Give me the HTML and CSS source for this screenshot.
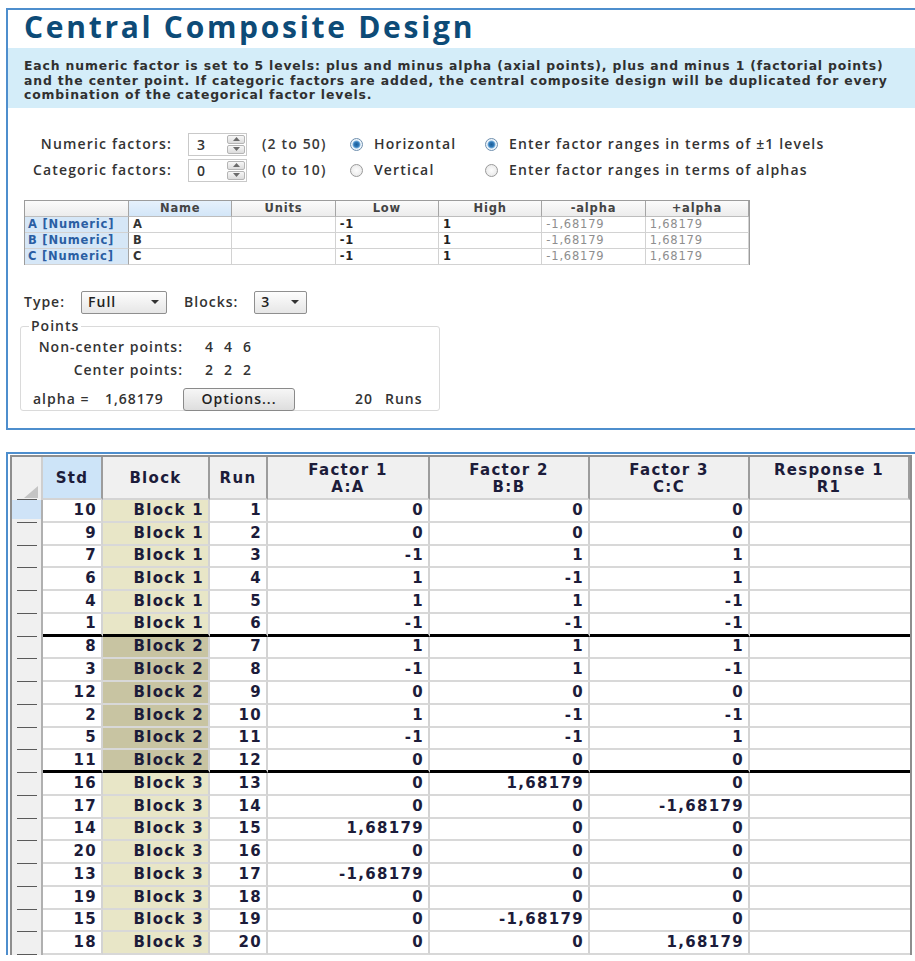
FILE: index.html
```html
<!DOCTYPE html>
<html lang="en">
<head>
<meta charset="utf-8">
<title>Central Composite Design</title>
<link rel="stylesheet" href="styles.css">
</head>
<body>
<main class="page">
  <section class="wizard">
    <h1 class="wizard-title">Central Composite Design</h1>
    <p class="wizard-intro"><span class="intro-line">Each numeric factor is set to 5 levels: plus and minus alpha (axial points), plus and minus 1 (factorial points)</span><span class="intro-line">and the center point. If categoric factors are added, the central composite design will be duplicated for every</span><span class="intro-line">combination of the categorical factor levels.</span></p>

    <div class="factor-grid">
      <span class="factor-label">Numeric factors:</span>
      <span class="spin"><span class="spin-value">3</span><span class="spin-buttons"><span class="spin-btn"><svg width="7" height="4" viewBox="0 0 7 4"><path d="M0 4 L3.5 0 L7 4 Z" fill="#6b6b6b"/></svg></span><span class="spin-btn"><svg width="7" height="4" viewBox="0 0 7 4"><path d="M0 0 L3.5 4 L7 0 Z" fill="#6b6b6b"/></svg></span></span></span>
      <span class="factor-range">(2 to 50)</span>
      <span class="radio is-on"><i class="radio-dot"></i>Horizontal</span>
      <span class="radio is-on"><i class="radio-dot"></i>Enter factor ranges in terms of ±1 levels</span>

      <span class="factor-label">Categoric factors:</span>
      <span class="spin"><span class="spin-value">0</span><span class="spin-buttons"><span class="spin-btn"><svg width="7" height="4" viewBox="0 0 7 4"><path d="M0 4 L3.5 0 L7 4 Z" fill="#6b6b6b"/></svg></span><span class="spin-btn"><svg width="7" height="4" viewBox="0 0 7 4"><path d="M0 0 L3.5 4 L7 0 Z" fill="#6b6b6b"/></svg></span></span></span>
      <span class="factor-range">(0 to 10)</span>
      <span class="radio"><i class="radio-dot"></i>Vertical</span>
      <span class="radio"><i class="radio-dot"></i>Enter factor ranges in terms of alphas</span>
    </div>

    <table class="ranges">
      <colgroup><col class="ranges-head"><col><col><col><col><col><col></colgroup>
      <thead>
        <tr><th class="corner"></th><th class="is-selected">Name</th><th>Units</th><th>Low</th><th>High</th><th>-alpha</th><th>+alpha</th></tr>
      </thead>
      <tbody>
        <tr><th>A [Numeric]</th><td>A</td><td></td><td class="level">-1</td><td class="level">1</td><td class="axial">-1,68179</td><td class="axial">1,68179</td></tr>
        <tr><th>B [Numeric]</th><td>B</td><td></td><td class="level">-1</td><td class="level">1</td><td class="axial">-1,68179</td><td class="axial">1,68179</td></tr>
        <tr><th>C [Numeric]</th><td>C</td><td></td><td class="level">-1</td><td class="level">1</td><td class="axial">-1,68179</td><td class="axial">1,68179</td></tr>
      </tbody>
    </table>

    <div class="design-type">
      <span>Type:</span>
      <span class="combo combo-type">Full<svg width="8" height="4" viewBox="0 0 8 4"><path d="M0 0 L4 4 L8 0 Z" fill="#333"/></svg></span>
      <span class="blocks-label">Blocks:</span>
      <span class="combo combo-blocks">3<svg width="8" height="4" viewBox="0 0 8 4"><path d="M0 0 L4 4 L8 0 Z" fill="#333"/></svg></span>
    </div>

    <fieldset class="points">
      <legend>Points</legend>
      <div class="points-row">
        <span class="points-label">Non-center points:</span>
        <span class="points-values"><span>4</span><span>4</span><span>6</span></span>
      </div>
      <div class="points-row">
        <span class="points-label">Center points:</span>
        <span class="points-values"><span>2</span><span>2</span><span>2</span></span>
      </div>
      <div class="points-row alpha-row">
        <span class="alpha-label">alpha =</span>
        <span class="alpha-value">1,68179</span>
        <button class="options-btn" type="button">Options...</button>
        <span class="runs"><span class="runs-count">20</span>Runs</span>
      </div>
    </fieldset>
  </section>

  <section class="sheet">
    <table class="design">
      <colgroup>
        <col class="c-rh"><col class="c-std"><col class="c-block"><col class="c-run">
        <col class="c-f1"><col class="c-f"><col class="c-f"><col class="c-f">
      </colgroup>
      <thead>
        <tr>
          <th class="rh corner"><svg width="14" height="12" viewBox="0 0 14 12"><path d="M14 0 L14 12 L0 12 Z" fill="#c4c4c4"/></svg></th>
          <th class="is-selected">Std</th>
          <th>Block</th>
          <th>Run</th>
          <th>Factor 1<br>A:A</th>
          <th>Factor 2<br>B:B</th>
          <th>Factor 3<br>C:C</th>
          <th>Response 1<br>R1</th>
        </tr>
      </thead>
      <tbody>
        <tr class="b1"><th class="rh is-current"></th><td>10</td><td class="blk">Block 1</td><td>1</td><td>0</td><td>0</td><td>0</td><td></td></tr>
        <tr class="b1"><th class="rh"></th><td>9</td><td class="blk">Block 1</td><td>2</td><td>0</td><td>0</td><td>0</td><td></td></tr>
        <tr class="b1"><th class="rh"></th><td>7</td><td class="blk">Block 1</td><td>3</td><td>-1</td><td>1</td><td>1</td><td></td></tr>
        <tr class="b1"><th class="rh"></th><td>6</td><td class="blk">Block 1</td><td>4</td><td>1</td><td>-1</td><td>1</td><td></td></tr>
        <tr class="b1"><th class="rh"></th><td>4</td><td class="blk">Block 1</td><td>5</td><td>1</td><td>1</td><td>-1</td><td></td></tr>
        <tr class="b1 block-end"><th class="rh"></th><td>1</td><td class="blk">Block 1</td><td>6</td><td>-1</td><td>-1</td><td>-1</td><td></td></tr>
        <tr class="b2"><th class="rh"></th><td>8</td><td class="blk">Block 2</td><td>7</td><td>1</td><td>1</td><td>1</td><td></td></tr>
        <tr class="b2"><th class="rh"></th><td>3</td><td class="blk">Block 2</td><td>8</td><td>-1</td><td>1</td><td>-1</td><td></td></tr>
        <tr class="b2"><th class="rh"></th><td>12</td><td class="blk">Block 2</td><td>9</td><td>0</td><td>0</td><td>0</td><td></td></tr>
        <tr class="b2"><th class="rh"></th><td>2</td><td class="blk">Block 2</td><td>10</td><td>1</td><td>-1</td><td>-1</td><td></td></tr>
        <tr class="b2"><th class="rh"></th><td>5</td><td class="blk">Block 2</td><td>11</td><td>-1</td><td>-1</td><td>1</td><td></td></tr>
        <tr class="b2 block-end"><th class="rh"></th><td>11</td><td class="blk">Block 2</td><td>12</td><td>0</td><td>0</td><td>0</td><td></td></tr>
        <tr class="b3"><th class="rh"></th><td>16</td><td class="blk">Block 3</td><td>13</td><td>0</td><td>1,68179</td><td>0</td><td></td></tr>
        <tr class="b3"><th class="rh"></th><td>17</td><td class="blk">Block 3</td><td>14</td><td>0</td><td>0</td><td>-1,68179</td><td></td></tr>
        <tr class="b3"><th class="rh"></th><td>14</td><td class="blk">Block 3</td><td>15</td><td>1,68179</td><td>0</td><td>0</td><td></td></tr>
        <tr class="b3"><th class="rh"></th><td>20</td><td class="blk">Block 3</td><td>16</td><td>0</td><td>0</td><td>0</td><td></td></tr>
        <tr class="b3"><th class="rh"></th><td>13</td><td class="blk">Block 3</td><td>17</td><td>-1,68179</td><td>0</td><td>0</td><td></td></tr>
        <tr class="b3"><th class="rh"></th><td>19</td><td class="blk">Block 3</td><td>18</td><td>0</td><td>0</td><td>0</td><td></td></tr>
        <tr class="b3"><th class="rh"></th><td>15</td><td class="blk">Block 3</td><td>19</td><td>0</td><td>-1,68179</td><td>0</td><td></td></tr>
        <tr class="b3"><th class="rh"></th><td>18</td><td class="blk">Block 3</td><td>20</td><td>0</td><td>0</td><td>1,68179</td><td></td></tr>
      </tbody>
    </table>
  </section>
</main>
</body>
</html>
```
FILE: styles.css
```css
* { box-sizing: border-box; }

body {
  margin: 0;
  background: #fff;
  font-family: "Open Sans", "DejaVu Sans", sans-serif;
  color: #2e2e2e;
}

.page {
  padding: 8px 0 0 6px;
}

/* ---------- wizard panel ---------- */
.wizard {
  height: 422px;
  border: 2px solid #4e8ecd;
  border-right: 0;
  background: #fff;
}

.wizard-title {
  margin: 0;
  height: 38px;
  padding-left: 16px;
  font: 700 30px/34px "Open Sans", sans-serif;
  letter-spacing: 2.7px;
  color: #0d4b77;
  white-space: nowrap;
}

.wizard-intro {
  display: flex;
  flex-direction: column;
  margin: 0;
  height: 60px;
  padding: 11px 16px 0;
  background: #d4edf9;
  font: 700 12.4px/14.5px "DejaVu Sans", sans-serif;
  letter-spacing: 0.85px;
  color: #303030;
  white-space: nowrap;
}

/* numeric / categoric factor inputs */
.factor-grid {
  display: grid;
  grid-template-columns: 164px 74px 88px 135px auto;
  grid-auto-rows: 26px;
  align-items: center;
  margin-top: 23px;
  padding-left: 16px;
  font: 600 14px/1 "Open Sans", sans-serif;
  letter-spacing: 1.15px;
  color: #333;
  white-space: nowrap;
}

.factor-label {
  text-align: right;
  padding-right: 16px;
}

.spin {
  display: flex;
  width: 59px;
  height: 23px;
  border: 1px solid #c9c9c9;
  background: #fff;
}

.spin-value {
  flex: 1;
  padding-left: 8px;
  line-height: 21px;
}

.spin-buttons {
  display: flex;
  flex-direction: column;
  width: 18px;
  margin: 1px;
  gap: 1px;
}

.spin-btn {
  flex: 1;
  display: flex;
  align-items: center;
  justify-content: center;
  border: 1px solid #b5b5b5;
  border-radius: 2px;
  background: linear-gradient(#f7f7f7, #dcdcdc);
}

.factor-range {
  color: #3a3a3a;
}

.radio {
  display: flex;
  align-items: center;
  gap: 11px;
}

.radio-dot {
  flex: none;
  width: 13px;
  height: 13px;
  border-radius: 50%;
  border: 1px solid #9a9a9a;
  background: radial-gradient(circle, #fdfdfd 0, #e4e4e4 100%);
}

.radio.is-on .radio-dot {
  border-color: #6f8fae;
  background: radial-gradient(circle, #1c5d96 0, #2f79b9 2.5px, #7fb4de 3.6px, #eef5fb 4.4px);
}

/* factor range table */
.ranges {
  margin: 17px 0 0 16px;
  width: 726px;
  table-layout: fixed;
  border-collapse: separate;
  border-spacing: 0;
  border: 1px solid #9c9c9c;
  border-bottom: 0;
  font: 700 11.5px/13px "DejaVu Sans", sans-serif;
  letter-spacing: 0.8px;
}

.ranges-head { width: 104px; }

.ranges th,
.ranges td {
  height: 16px;
  padding: 0 4px;
  border-right: 1px solid #d2d2d2;
  border-bottom: 1px solid #d2d2d2;
  text-align: left;
  white-space: nowrap;
}

.ranges thead th {
  text-align: center;
  color: #444;
  background: linear-gradient(#fbfbfb, #ececec);
  border-right: 1px solid #a5a5a5;
  border-bottom: 1px solid #bdbdbd;
}

.ranges thead th.is-selected {
  background: linear-gradient(#e6f1fc, #d3e6f8);
}

.ranges tbody th {
  padding-left: 3px;
  color: #2a5ea3;
  background: #d6e7f7;
  border-right: 1px solid #a5a5a5;
}

.ranges td { color: #333; }
.ranges .level { color: #222; }
.ranges .axial { font-weight: 400; color: #8e8e8e; }

/* design type selectors */
.design-type {
  display: flex;
  align-items: center;
  height: 24px;
  margin: 25px 0 0 16px;
  font: 600 14px/1 "Open Sans", sans-serif;
  letter-spacing: 1px;
  color: #333;
}

.combo {
  display: flex;
  align-items: center;
  justify-content: space-between;
  height: 23px;
  padding: 0 7px 0 6px;
  border: 1px solid #8f8f8f;
  border-radius: 2px;
  background: linear-gradient(#fdfdfd, #e6e6e6);
  color: #222;
}

.combo-type { width: 86px; margin-left: 16px; }
.blocks-label { margin-left: 17px; }
.combo-blocks { width: 53px; margin-left: 16px; }

/* points group box */
.points {
  width: 420px;
  height: 92px;
  margin: 5px 0 0 12px;
  padding: 2px 0 0 12px;
  border: 1px solid #dadada;
  border-radius: 3px;
  font: 600 14px/1 "Open Sans", sans-serif;
  letter-spacing: 1px;
  color: #333;
}

.points legend {
  padding: 0 2px;
  margin-left: -4px;
}

.points-row {
  display: flex;
  align-items: center;
  height: 23px;
  white-space: nowrap;
}

.points-label {
  width: 172px;
  text-align: right;
  padding-right: 22px;
}

.points-values {
  display: flex;
  gap: 10px;
}

.alpha-row {
  height: 30px;
  margin-top: 3px;
}

.alpha-label { width: 72px; }
.alpha-value { width: 78px; }

.options-btn {
  width: 112px;
  height: 23px;
  padding: 0;
  border: 1px solid #8a8a8a;
  border-radius: 3px;
  background: linear-gradient(#f6f6f6, #dedede);
  font: 600 14px/1 "Open Sans", sans-serif;
  letter-spacing: 1px;
  color: #222;
}

.runs {
  margin-left: 60px;
}

.runs-count { margin-right: 12px; }

/* ---------- design spreadsheet ---------- */
.sheet {
  margin-top: 22px;
  padding: 1px 0 0 2px;
  border-top: 2px solid #4e8ecd;
  border-left: 2px solid #4e8ecd;
  background: #fff;
}

.design {
  width: 902px;
  table-layout: fixed;
  border-collapse: separate;
  border-spacing: 0;
  border: 2px solid #8e8e8e;
  border-bottom: 0;
  font: 700 15px/1 "DejaVu Sans", sans-serif;
  letter-spacing: 1.3px;
  color: #1c1c3a;
}

.c-rh { width: 31px; }
.c-std { width: 60px; }
.c-block { width: 107px; }
.c-run { width: 58px; }
.c-f1 { width: 162px; }
.c-f { width: 160px; }

.design thead th {
  height: 43px;
  padding: 3px 2px 0;
  line-height: 17.5px;
  text-align: center;
  font-weight: 700;
  background: #f0f0f0;
  border-right: 2px solid #9c9c9c;
  border-bottom: 2px solid #d4d4d4;
  white-space: nowrap;
}

.design thead th.is-selected {
  background: #cde4f8;
}

.design thead th.corner {
  padding: 0 3px 2px 0;
  text-align: right;
  vertical-align: bottom;
  border-right: 2px solid #cfcfcf;
}

.design thead th.corner svg { display: block; margin-left: auto; }

.design tbody tr { height: 22.75px; }

.design td {
  padding: 0 4px 0 0;
  text-align: right;
  white-space: nowrap;
  background: #fff;
  border-right: 2px solid #d3d3d3;
  border-bottom: 2px solid #d8d8d8;
}

.design td:last-child { border-right: 0; }

.design .rh {
  background: #f0f0f0 linear-gradient(#5a5a5a, #5a5a5a) no-repeat 5px 100% / 20px 1px;
  border-right: 2px solid #b0b0b0;
  border-bottom: 0;
}

.design .rh.is-current {
  background: linear-gradient(#5a5a5a, #5a5a5a) no-repeat 5px 100% / 20px 1px,
              linear-gradient(#cfe3f7, #cfe3f7) no-repeat 0 0 / 100% 19px,
              #f0f0f0;
}

.design .blk { background: #e8e6c7; }
.design .b2 .blk { background: #c8c4a2; }

.design .block-end td { border-bottom: 3px solid #000; }
```
